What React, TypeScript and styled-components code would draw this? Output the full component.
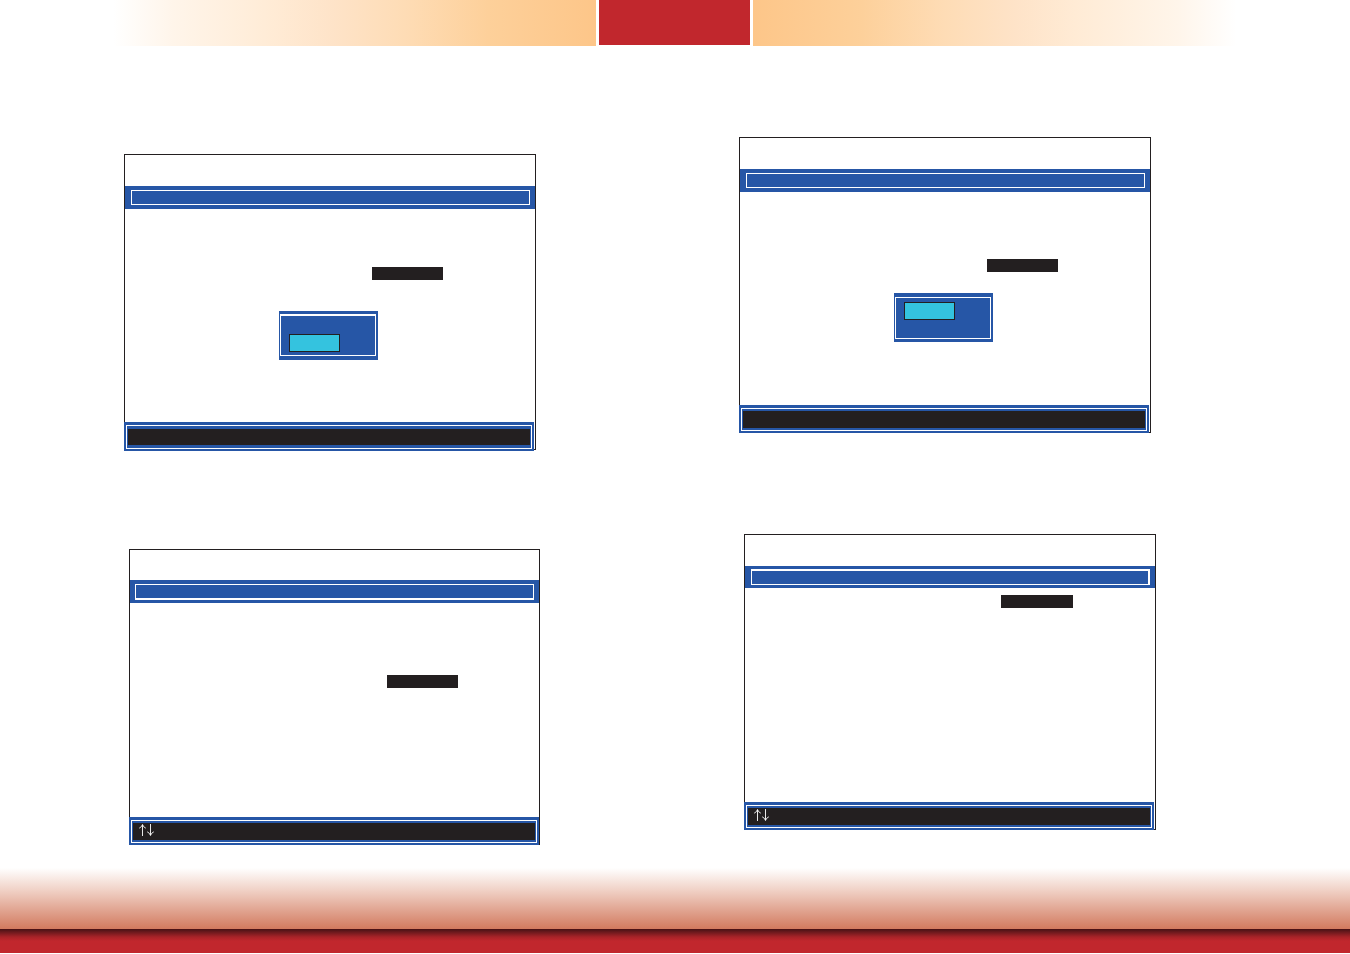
import React from "react";
import styled, { createGlobalStyle } from "styled-components";

const blue = "#2656a6";
const ink = "#231f20";
const red = "#c1272d";

const GlobalStyle = createGlobalStyle`
  *, *::before, *::after { box-sizing: border-box; }
  body { margin: 0; background: #fff; font-family: "Liberation Serif", serif; }
`;

const Page = styled.div`
  display: flex;
  flex-direction: column;
  min-height: 100vh;
  padding-bottom: 1px;
`;

const TopBar = styled.header`
  display: grid;
  grid-template-columns: minmax(0, 596fr) 151px minmax(0, 597fr);
  column-gap: 3px;
  height: 46px;
`;

const Glow = styled.div<{ $toward: "left" | "right" }>`
  background: linear-gradient(
    to ${(p) => p.$toward},
    #fdc689 0%,
    #fdd09a 18%,
    #fedcb5 32%,
    #fee3c8 44%,
    #ffebd5 54%,
    #fff5ea 71%,
    #fff 81%
  );
`;

const PageTab = styled.div`
  height: 45px;
  background: ${red};
`;

const Spread = styled.main`
  display: grid;
  grid-template-columns: minmax(0, 615fr) minmax(0, 611fr);
  padding-left: 124px;
`;

const Column = styled.div<{ $top: number; $gap: number }>`
  display: flex;
  flex-direction: column;
  gap: ${(p) => p.$gap}px;
  padding-top: ${(p) => p.$top}px;
`;

const Screen = styled.section<{ $inset?: boolean; $width?: number }>`
  display: flex;
  flex-direction: column;
  width: ${(p) => p.$width ?? 412}px;
  max-width: 100%;
  min-height: 296px;
  margin-left: ${(p) => (p.$inset ? 5 : 0)}px;
  border: 1px solid ${ink};
`;

const Caption = styled.div<{ $height?: number }>`
  height: ${(p) => p.$height ?? 31}px;
`;

const MenuBar = styled.div<{ $height?: number; $pad?: string }>`
  display: flex;
  height: ${(p) => p.$height ?? 23}px;
  padding: ${(p) => p.$pad ?? "4px 5px 4px 6px"};
  background: ${blue};
`;

const MenuFrame = styled.div<{ $borders?: string }>`
  flex: 1;
  border: solid #fff;
  border-width: ${(p) => p.$borders ?? "1px"};
`;

const Body = styled.div<{ $top: number; $gap?: number }>`
  display: flex;
  flex: 1;
  flex-direction: column;
  align-items: flex-start;
  gap: ${(p) => p.$gap ?? 0}px;
  padding-top: ${(p) => p.$top}px;
`;

const Field = styled.div<{ $left: number; $width?: number }>`
  width: ${(p) => p.$width ?? 71}px;
  height: 13px;
  margin-left: ${(p) => p.$left}px;
  background: ${ink};
`;

const Popup = styled.div<{ $pad: string }>`
  display: flex;
  width: 99px;
  height: 49px;
  margin-left: 154px;
  padding: ${(p) => p.$pad};
  background: ${blue};
`;

const PopupFrame = styled.div<{ $low?: boolean }>`
  display: flex;
  flex: 1;
  align-items: ${(p) => (p.$low ? "flex-end" : "flex-start")};
  padding: ${(p) => (p.$low ? "0 8px 3px" : "4px 8px 0")};
  border: solid #fff;
  border-width: ${(p) => (p.$low ? "2px 1px 1px" : "1px")};
`;

const Choice = styled.button`
  width: 51px;
  height: 18px;
  padding: 0;
  border: 1px solid ${ink};
  background: #34c3df;
`;

const HelpBar = styled.div<{ $over?: number; $height?: number; $right?: number }>`
  height: ${(p) => p.$height ?? 28}px;
  margin: 0 ${(p) => p.$right ?? 1}px -${(p) => p.$over ?? 1}px -1px;
  padding: 3px 2px 2px;
  background: ${blue};
`;

const HelpFrame = styled.div<{ $gap?: number }>`
  display: flex;
  height: 100%;
  padding: ${(p) => p.$gap ?? 2}px 1px;
  border: 1px solid #fff;
`;

const HelpText = styled.div`
  display: flex;
  flex: 1;
  padding-left: 5px;
  background: ${ink};
`;

const ArrowIcon = styled.svg`
  width: 18px;
  height: 14px;
  fill: none;
  stroke: #fff;
  stroke-width: 0.9;
`;

const Fade = styled.div`
  height: 61px;
  margin-top: auto;
  background: linear-gradient(#fff, #f1d3c8 35%, #d27a5f);
`;

const BaseBar = styled.footer`
  height: 24px;
  background: linear-gradient(#461114 0, #6b191d 3px, #a82328 8px, ${red} 12px);
`;

function ArrowKeys() {
  return (
    <ArrowIcon viewBox="0 0 18 14" role="img" aria-label="Up and down arrow keys">
      <path d="M4.5 13V1.6M1.2 5.2Q3.8 4 4.5 1.6Q5.2 4 7.8 5.2" />
      <path d="M12.5 1V12.4M9.2 8.8Q11.8 10 12.5 12.4Q13.2 10 15.8 8.8" />
    </ArrowIcon>
  );
}

export default function App() {
  return (
    <Page>
      <GlobalStyle />
      <TopBar>
        <Glow $toward="left" />
        <PageTab />
        <Glow $toward="right" />
      </TopBar>
      <Spread>
        <Column $top={108} $gap={99}>
          <Screen>
            <Caption />
            <MenuBar><MenuFrame /></MenuBar>
            <Body $top={58} $gap={31}>
              <Field $left={247} />
              <Popup $pad="3px 2px 4px 1px">
                <PopupFrame $low><Choice type="button" aria-label="Selected option" /></PopupFrame>
              </Popup>
            </Body>
            <HelpBar $height={29} $over={2}><HelpFrame $gap={3}><HelpText /></HelpFrame></HelpBar>
          </Screen>
          <Screen $inset $width={411}>
            <Caption $height={30} />
            <MenuBar $pad="4px 5px 3px"><MenuFrame $borders="1px 1px 2px" /></MenuBar>
            <Body $top={72}>
              <Field $left={257} />
            </Body>
            <HelpBar $right={0}><HelpFrame><HelpText><ArrowKeys /></HelpText></HelpFrame></HelpBar>
          </Screen>
        </Column>
        <Column $top={91} $gap={101}>
          <Screen>
            <Caption />
            <MenuBar><MenuFrame /></MenuBar>
            <Body $top={67} $gap={21}>
              <Field $left={247} />
              <Popup $pad="4px 2px 3px 1px">
                <PopupFrame><Choice type="button" aria-label="Selected option" /></PopupFrame>
              </Popup>
            </Body>
            <HelpBar><HelpFrame><HelpText /></HelpFrame></HelpBar>
          </Screen>
          <Screen $inset>
            <Caption />
            <MenuBar $height={22} $pad="3px 5px 3px 6px"><MenuFrame $borders="2px 2px 1px 1px" /></MenuBar>
            <Body $top={7}>
              <Field $left={256} $width={72} />
            </Body>
            <HelpBar><HelpFrame><HelpText><ArrowKeys /></HelpText></HelpFrame></HelpBar>
          </Screen>
        </Column>
      </Spread>
      <Fade />
      <BaseBar />
    </Page>
  );
}
